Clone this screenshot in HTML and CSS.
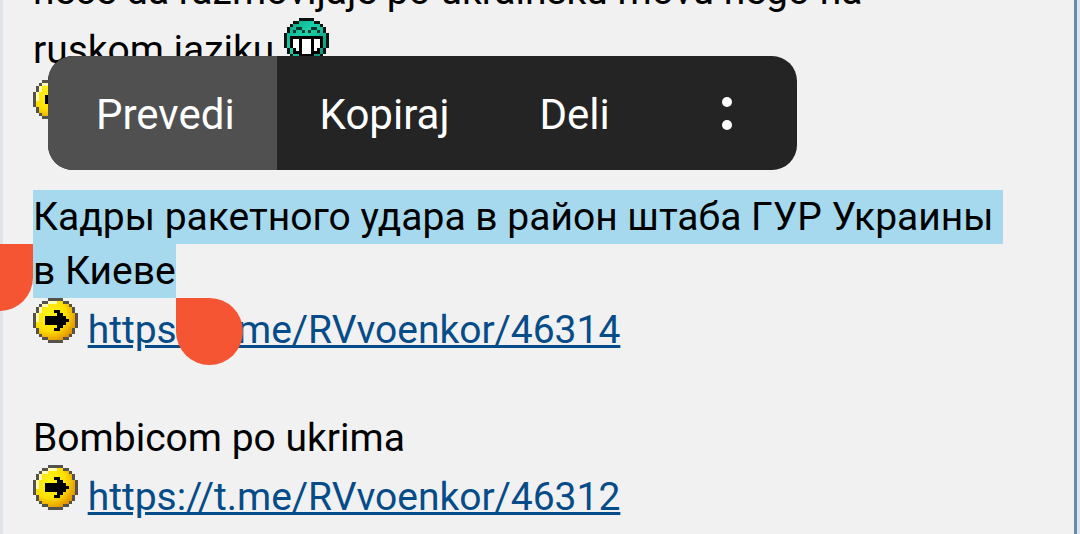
FILE: index.html
```html
<!DOCTYPE html>
<html lang="sr">
<head>
    <meta charset="UTF-8">
    <meta name="viewport" content="width=device-width, initial-scale=1.0">
    <title>Forum</title>
    <link rel="stylesheet" href="styles.css">
</head>
<body>
    <!-- shared smileys, drawn on a 15x15 grid -->
    <svg class="sprites" aria-hidden="true">
        <defs>
            <radialGradient id="yellow" cx="0.35" cy="0.35" r="0.75">
                <stop offset="0" stop-color="#fff21a"/>
                <stop offset="0.55" stop-color="#ffe100"/>
                <stop offset="1" stop-color="#e08a00"/>
            </radialGradient>
            <linearGradient id="green" x1="0" y1="0" x2="1" y2="1">
                <stop offset="0" stop-color="#08a585"/>
                <stop offset="0.4" stop-color="#1bd0aa"/>
                <stop offset="1" stop-color="#058a6e"/>
            </linearGradient>
        </defs>
        <symbol id="arrow" viewBox="0 0 15 15">
            <path fill="url(#yellow)" d="M5 1h5v1h2v1h1v2h1v5h-1v2h-1v1h-2v1h-5v-1h-2v-1h-1v-2h-1v-5h1v-2h1v-1h2z"/>
            <path fill="#fffbb8" d="M5 1h3v1h-3zM3 2h2v1h-2zM2 3h1v2h-1zM1 5h1v3h-1z"/>
            <path fill="#55524c" d="M5 0h5v1h-5zM3 1h2v1h-2zM10 1h2v1h-2zM2 2h1v1h-1zM12 2h1v1h-1zM1 3h1v2h-1zM13 3h1v2h-1zM0 5h1v5h-1zM14 5h1v5h-1zM1 10h1v2h-1zM13 10h1v2h-1zM2 12h1v1h-1zM12 12h1v1h-1zM3 13h2v1h-2zM10 13h2v1h-2zM5 14h5v1h-5z"/>
            <path fill="#000" d="M7 4h2v1h1v1h1v1h1v1h-1v1h-1v1h-1v1h-2v-1h1v-1h-4v-3h4v-1h-1z"/>
        </symbol>
        <symbol id="mrgreen" viewBox="0 0 15 15">
            <path fill="url(#green)" d="M5 1h5v1h2v1h1v2h1v5h-1v2h-1v1h-2v1h-5v-1h-2v-1h-1v-2h-1v-5h1v-2h1v-1h2z"/>
            <path fill="#0a1512" d="M5 0h5v1h-5zM3 1h2v1h-2zM10 1h2v1h-2zM2 2h1v1h-1zM12 2h1v1h-1zM1 3h1v2h-1zM13 3h1v2h-1zM0 5h1v5h-1zM14 5h1v5h-1zM1 10h1v2h-1zM13 10h1v2h-1zM2 12h1v1h-1zM12 12h1v1h-1zM3 13h2v1h-2zM10 13h2v1h-2zM5 14h5v1h-5z"/>
            <path fill="#06382c" d="M4 3h2v1h-2zM3 4h1v1h-1zM6 4h1v1h-1zM9 3h2v1h-2zM8 4h1v1h-1zM11 4h1v1h-1z"/>
            <path fill="#000" d="M2 6h11v4h-1v2h-2v1h-5v-1h-2v-2h-1z"/>
            <path fill="#fff" d="M3 7h2v4h-1v-1h-1zM6 7h3v5h-3zM10 7h2v3h-1v1h-1z"/>
        </symbol>
    </svg>

    <main class="post">
        <p class="post-text">
            neće da razmovljaje po ukrainsku movu nego na<br>
            ruskom jaziku <svg class="smiley" role="img" aria-label="Mr. Green"><use href="#mrgreen"/></svg><br>
            <svg class="smiley" role="img" aria-label="Arrow"><use href="#arrow"/></svg><br>
            <br>
            <mark class="selection">Кадры ракетного удара в район штаба ГУР Украины&nbsp;<br>в Киеве</mark><br>
            <svg class="smiley" role="img" aria-label="Arrow"><use href="#arrow"/></svg>
            <a href="https://t.me/RVvoenkor/46314">https://t.me/RVvoenkor/46314</a><br>
            <br>
            Bombicom po ukrima<br>
            <svg class="smiley" role="img" aria-label="Arrow"><use href="#arrow"/></svg>
            <a href="https://t.me/RVvoenkor/46312">https://t.me/RVvoenkor/46312</a>
        </p>
    </main>

    <div class="handle handle-start"></div>
    <div class="handle handle-end"></div>

    <div class="toolbar" role="toolbar">
        <button class="toolbar-btn active" type="button">Prevedi</button>
        <button class="toolbar-btn" type="button">Kopiraj</button>
        <button class="toolbar-btn" type="button">Deli</button>
        <button class="toolbar-btn more" type="button" aria-label="Više">
            <span class="dot"></span>
            <span class="dot"></span>
        </button>
    </div>
</body>
</html>
```
FILE: styles.css
```css
:root {
    --bg: #f1f1f1;
    --link: #064c89;
    --select: #a6d9ed;
    --handle: #f55533;
    --handle-size: 67px;
}
body {
    margin: 0;
    height: 100vh;
    overflow: hidden;
    position: relative;
    background-color: #dce5ee;
    font-family: Roboto, "Noto Sans", sans-serif;
    color: #000;
}
.sprites {
    position: absolute;
    width: 0;
    height: 0;
}
.post {
    height: 100%;
    box-sizing: border-box;
    overflow: hidden;
    margin-right: 3px;
    padding: 0 30px;
    border-left: 3px solid #e0e4e8;
    border-right: 3px solid #6a8ba3;
    background-color: var(--bg);
}
/* the post is scrolled, its first line is cut by the top edge */
.post-text {
    margin: -36px 0 0;
    font-size: 39px;
    line-height: 54px;
}
.post-text a {
    color: var(--link);
    text-decoration: underline;
}
.smiley {
    width: 45px;
    height: 45px;
    vertical-align: baseline;
    shape-rendering: crispEdges;
}
.selection {
    padding: 4px 0;
    background-color: var(--select);
    color: inherit;
}
.handle {
    position: absolute;
    width: var(--handle-size);
    height: var(--handle-size);
    background-color: var(--handle);
}
.handle-start {
    left: -34px;
    top: 244px;
    border-radius: 50% 0 50% 50%;
}
.handle-end {
    left: 176px;
    top: 298px;
    border-radius: 0 50% 50% 50%;
}
.toolbar {
    position: absolute;
    left: 48px;
    top: 56px;
    display: flex;
    height: 114px;
    border-radius: 25px;
    overflow: hidden;
    background-color: #242424;
}
.toolbar-btn {
    padding: 2px 47px 0 43px;
    border: 0;
    background: none;
    color: #fff;
    font-family: inherit;
    font-size: 42px;
    cursor: pointer;
}
.toolbar-btn.active {
    padding: 2px 42px 0 48px;
    background-color: #505050;
}
.toolbar-btn.more {
    display: flex;
    flex-direction: column;
    align-items: center;
    justify-content: center;
    gap: 13px;
    padding: 0 65px;
}
.dot {
    width: 10px;
    height: 10px;
    border-radius: 50%;
    background-color: #fff;
}
```
